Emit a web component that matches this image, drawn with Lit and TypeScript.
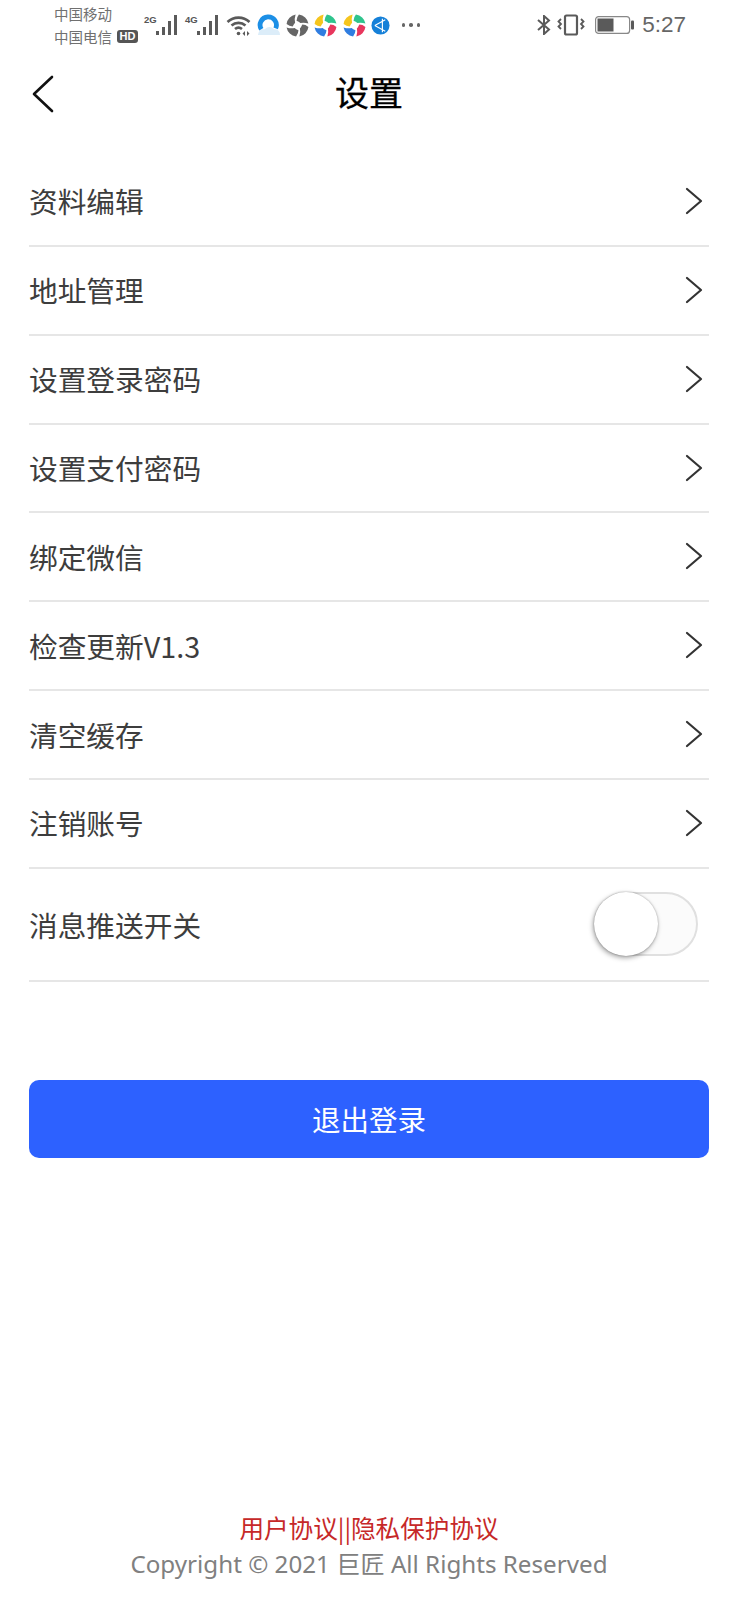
import { LitElement, html, css, svg } from "lit";
import { customElement } from "lit/decorators.js";

const rows = [
  "资料编辑",
  "地址管理",
  "设置登录密码",
  "设置支付密码",
  "绑定微信",
  "检查更新V1.3",
  "清空缓存",
  "注销账号",
];

const bars = (label: string) => html`
  <span class="net">
    <span class="net-label">${label}</span>
    <svg width="22" height="20" viewBox="0 0 22 20">
      <g fill="#5a5a5a">
        <rect x="0" y="16" width="3" height="4" />
        <rect x="6" y="12" width="3" height="8" />
        <rect x="12" y="6" width="3" height="14" />
        <rect x="18" y="0" width="3" height="20" />
      </g>
    </svg>
  </span>
`;

const blade = "M13.5 0.6 A11.5 11.5 0 0 1 23.4 10 Q19 8.5 15 9.5 Q13.5 8 11 7 Q11 3.5 13.5 0.6 Z";

const pinwheel = (colors: string[]) => svg`
  <svg class="app" width="23" height="23" viewBox="0 0 24 24">
    <path d=${blade} fill=${colors[0]} />
    <path d=${blade} fill=${colors[1]} transform="rotate(90 12 12)" />
    <path d=${blade} fill=${colors[2]} transform="rotate(180 12 12)" />
    <path d=${blade} fill=${colors[3]} transform="rotate(270 12 12)" />
  </svg>
`;

@customElement("app-root")
export class AppRoot extends LitElement {
  static styles = css`
    :host {
      display: block;
      width: 738px;
      height: 1600px;
      background: #fff;
      font-family: "Noto Sans CJK SC", "Noto Sans", sans-serif;
      color: #333;
      overflow: hidden;
    }

    .page {
      display: flex;
      flex-direction: column;
      height: 100%;
    }

    .status {
      display: flex;
      align-items: center;
      height: 50px;
      padding: 0 52px 0 54px;
      color: #666;
    }

    .carriers {
      display: flex;
      flex-direction: column;
      font-size: 14.5px;
      line-height: 23px;
      width: 90px;
      flex: none;
      color: #707070;
    }

    .carrier-line {
      display: flex;
      align-items: center;
      gap: 5px;
      white-space: nowrap;
    }

    .hd {
      background: #555;
      color: #fff;
      font-family: "Liberation Sans", sans-serif;
      font-size: 11px;
      font-weight: 700;
      line-height: 13px;
      height: 13px;
      padding: 0 2.5px;
      border-radius: 3px;
    }

    .net {
      display: flex;
      align-items: flex-start;
      width: 34px;
      margin-right: 7px;
    }

    .net-label {
      font-family: "Liberation Sans", sans-serif;
      font-size: 9.5px;
      font-weight: 700;
      line-height: 10px;
      width: 12px;
      flex: none;
      color: #555;
    }

    .left {
      display: flex;
      align-items: center;
    }

    .icons {
      display: flex;
      align-items: center;
      gap: 5.5px;
      margin-left: 5px;
    }

    .app {
      flex: none;
    }

    .dots {
      display: flex;
      gap: 4px;
      margin-left: 6px;
    }

    .dots i {
      width: 3.5px;
      height: 3.5px;
      border-radius: 50%;
      background: #666;
    }

    .right {
      display: flex;
      align-items: center;
      gap: 6px;
      margin-left: auto;
    }

    .battery {
      margin-left: 4px;
    }

    .time {
      font-family: "Liberation Sans", sans-serif;
      font-size: 22.5px;
      color: #666;
      margin-left: 2px;
    }

    .header {
      display: flex;
      align-items: center;
      justify-content: center;
      position: relative;
      height: 88px;
      padding-bottom: 6px;
      box-sizing: border-box;
      font-size: 34px;
      -webkit-text-stroke: 0.3px #000;
      color: #000;
    }

    .back {
      position: absolute;
      left: 32px;
      top: 25px;
    }

    .list {
      display: flex;
      flex-direction: column;
      margin: 19px 29px 0;
    }

    .row {
      display: flex;
      align-items: center;
      justify-content: space-between;
      height: 87.86px;
      border-bottom: 2px solid #e6e6e6;
      box-sizing: content-box;
      font-size: 28.7px;
      color: #3d3d3d;
      margin-bottom: -1px;
    }

    .row.switch {
      height: 111px;
      padding-top: 1px;
    }

    .chev {
      margin-right: 5px;
    }

    .toggle {
      position: relative;
      box-sizing: border-box;
      width: 104px;
      height: 64px;
      margin-right: 11px;
      border: 2px solid #e0e0e0;
      border-radius: 32px;
      background: #fbfbfb;
    }

    .knob {
      position: absolute;
      left: -2px;
      top: -2px;
      width: 64px;
      height: 64px;
      border-radius: 50%;
      background: #fff;
      box-shadow: -1px 2px 5px rgba(0, 0, 0, 0.35), 0 0 2px rgba(0, 0, 0, 0.3);
    }

    .logout {
      display: flex;
      align-items: center;
      justify-content: center;
      height: 78px;
      margin: 99px 29px 0;
      border-radius: 10px;
      background: #2d61ff;
      color: #fff;
      font-size: 28.5px;
    }

    .footer {
      margin-top: auto;
      padding-bottom: 18px;
      text-align: center;
      line-height: 36px;
    }

    .links {
      font-size: 24.6px;
      line-height: 38px;
      color: #c62828;
    }

    .copyright {
      font-family: "Noto Sans", "Noto Sans CJK SC", sans-serif;
      font-size: 24.2px;
      color: #808080;
    }
  `;

  render() {
    return html`
      <div class="page">
        <div class="status">
          <div class="carriers">
            <div class="carrier-line">中国移动</div>
            <div class="carrier-line">中国电信<span class="hd">HD</span></div>
          </div>
          <div class="left">
            ${bars("2G")} ${bars("4G")}
            <svg width="26" height="22" viewBox="0 0 26 22" fill="none" stroke="#5a5a5a" stroke-width="2.6">
              <path d="M1.5 8 A16 16 0 0 1 23.5 8" />
              <path d="M5.5 11.5 A10.5 10.5 0 0 1 19.5 11.5" />
              <path d="M9 15 A5.5 5.5 0 0 1 16 15" />
              <circle cx="12.5" cy="19.5" r="1.8" fill="#5a5a5a" stroke="none" />
              <path d="M19 17 L16.5 19.5 L19 22 Z M21 17 L23.5 19.5 L21 22 Z" fill="#5a5a5a" stroke="none" />
            </svg>
          </div>
          <div class="icons">
            <svg class="app" width="23" height="23" viewBox="0 0 24 24">
              <path d="M1 22 Q2 15 8 16 Q13 11 18 16 Q24 16 24 22 Z" fill="#dcedf9" />
              <path d="M4.5 16 A8.5 8.5 0 1 1 19.5 15" fill="none" stroke="#1c8fe6" stroke-width="5" />
            </svg>
            ${pinwheel(["#666", "#666", "#666", "#666"])}
            ${pinwheel(["#2fc48d", "#e8365d", "#2f7de0", "#f5c51e"])}
            ${pinwheel(["#2fc48d", "#e8365d", "#2f7de0", "#f5c51e"])}
            <svg class="app" width="19" height="19" viewBox="0 0 20 20">
              <circle cx="10" cy="10" r="9.5" fill="#1580d8" />
              <path d="M4 10 L15 4 M4 10 L15 16 M12 3 V17" stroke="#fff" stroke-width="1.2" />
            </svg>
            <span class="dots"><i></i><i></i><i></i></span>
          </div>
          <div class="right">
            <svg width="14" height="20" viewBox="0 0 14 20" fill="none" stroke="#5a5a5a" stroke-width="2">
              <path d="M1 5 L12 14.5 L7 19 V1 L12 5.5 L1 15" />
            </svg>
            <svg width="28" height="22" viewBox="0 0 28 22" fill="none" stroke="#5a5a5a" stroke-width="2.2">
              <rect x="8" y="1.5" width="12" height="19" rx="1.5" />
              <path d="M4 5 L1.5 7.5 L4 10 L1.5 12.5 L4 15 M24 5 L26.5 7.5 L24 10 L26.5 12.5 L24 15" stroke-width="1.8" />
            </svg>
            <svg class="battery" width="39" height="18" viewBox="0 0 39 18">
              <rect x="0.6" y="0.6" width="34" height="16.8" rx="3" fill="none" stroke="#888" stroke-width="1.2" />
              <rect x="2.5" y="2.5" width="16" height="13" fill="#5a5a5a" />
              <rect x="36" y="4.5" width="3" height="9" rx="1" fill="#5a5a5a" />
            </svg>
            <span class="time">5:27</span>
          </div>
        </div>

        <div class="header">
          <svg class="back" width="22" height="38" viewBox="0 0 22 38" fill="none" stroke="#111" stroke-width="2.6" stroke-linecap="round" stroke-linejoin="round">
            <path d="M20 2 L2 19 L20 36" />
          </svg>
          设置
        </div>

        <div class="list">
          ${rows.map(
            (r) => html`
              <div class="row">
                <span>${r}</span>
                <svg class="chev" width="20" height="28" viewBox="0 0 20 28" fill="none" stroke="#333" stroke-width="2.2" stroke-linecap="round" stroke-linejoin="round">
                  <path d="M3 2 L17 14 L3 26" />
                </svg>
              </div>
            `
          )}
          <div class="row switch">
            <span>消息推送开关</span>
            <div class="toggle"><div class="knob"></div></div>
          </div>
        </div>

        <div class="logout">退出登录</div>

        <div class="footer">
          <div class="links">用户协议||隐私保护协议</div>
          <div class="copyright">Copyright © 2021 巨匠 All Rights Reserved</div>
        </div>
      </div>
    `;
  }
}
